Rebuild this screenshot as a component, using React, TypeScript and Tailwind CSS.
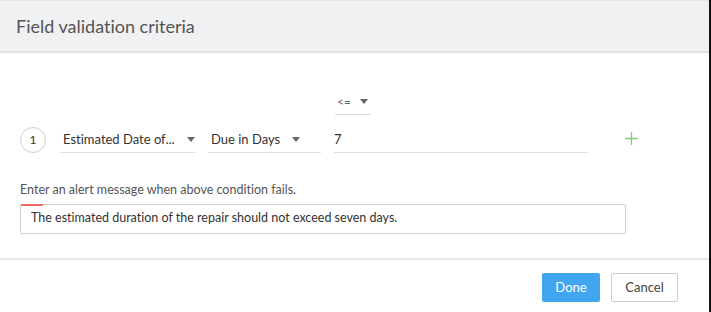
function Caret() {
  return (
    <svg width="8" height="5" viewBox="0 0 8 5" className="shrink-0">
      <path d="M0 0h8L4 5z" fill="#666" />
    </svg>
  )
}

function Select({ label, width }: { label: string; width: string }) {
  return (
    <div className={`flex h-[26px] items-center border-b border-[#e0e0e0] pl-[3px] ${width}`}>
      <span className="text-[13px] text-[#333]">{label}</span>
      <span className="ml-[12px]">
        <Caret />
      </span>
    </div>
  )
}

export default function App() {
  return (
    <div className="flex h-[312px] w-[711px] border-r-2 border-[#111] bg-white font-['Lato',sans-serif] [font-variant-ligatures:none]">
      <div className="flex flex-1 flex-col">
        {/* Header */}
        <div className="flex h-[53px] items-center border-t border-b-2 border-t-[#e4e5e7] border-b-[#dfe0e2] bg-[#f0f1f3] px-[16px]">
          <h1 className="text-[18px] font-normal text-[#555]">Field validation criteria</h1>
        </div>

        {/* Body */}
        <div className="flex flex-1 flex-col px-[20px] pt-[36px]">
          <div className="ml-[315px] flex h-[26px] w-[36px] items-center gap-[9px] border-b border-[#dcdcdc] pl-[2px]">
            <span className="text-[12px] text-[#666]">&lt;=</span>
            <Caret />
          </div>

          <div className="mt-[12px] flex items-center">
            <div className="flex h-[26px] w-[26px] items-center justify-center rounded-full border border-[#cfcfcf] text-[12px] text-[#333]">
              1
            </div>
            <div className="ml-[14px] flex items-center gap-[13px]">
              <Select label="Estimated Date of..." width="w-[135px]" />
              <Select label="Due in Days" width="w-[113px]" />
              <div className="flex h-[26px] w-[254px] items-center border-b border-[#e0e0e0]">
                <span className="text-[13px] text-[#333]">7</span>
              </div>
            </div>
            <svg width="13" height="13" viewBox="0 0 13 13" className="ml-[37px] -mt-[4px]">
              <path d="M6.5 0v13M0 6.5h13" stroke="#86c97a" strokeWidth="1.3" />
            </svg>
          </div>

          <p className="mt-[28px] text-[12.5px] text-[#555]">Enter an alert message when above condition fails.</p>
          <div className="relative mt-[4px] flex h-[30px] w-[606px] items-center rounded-[2px] border border-[#cfcfcf] px-[10px]">
            <div className="absolute -top-px left-0 h-[2px] w-[22px] bg-[#f06a6a]" />
            <span className="text-[12.5px] text-[#333]">The estimated duration of the repair should not exceed seven days.</span>
          </div>
        </div>

        {/* Footer */}
        <div className="flex h-[54px] items-center justify-end gap-[11px] border-t-2 border-[#e6e6e6] pt-[3px] pr-[31px]">
          <button className="h-[29px] w-[58px] rounded-[2px] bg-[#42a5ef] text-[13px] text-white">Done</button>
          <button className="h-[29px] w-[67px] rounded-[2px] border border-[#cccccc] bg-white text-[13px] text-[#444]">Cancel</button>
        </div>
      </div>
    </div>
  )
}
